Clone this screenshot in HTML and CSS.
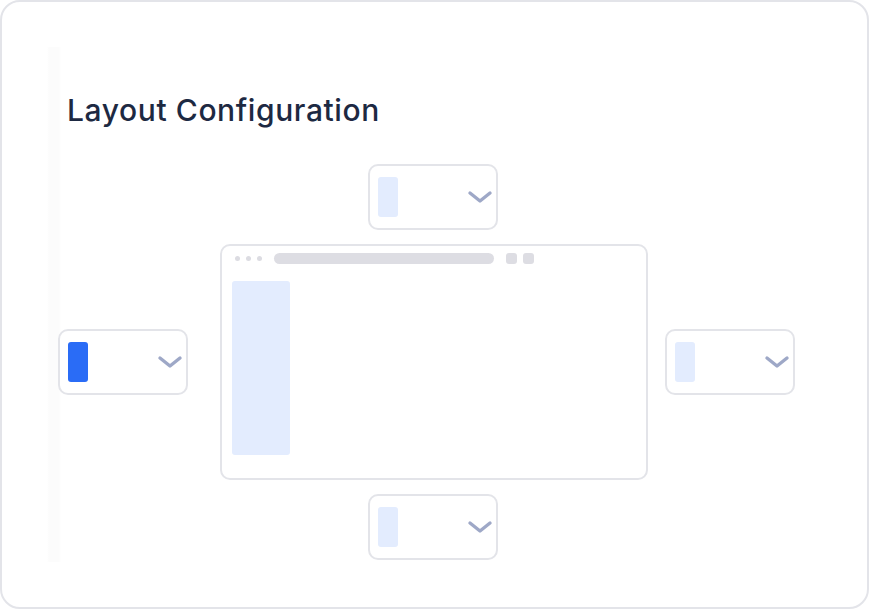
FILE: index.html
```html
<!DOCTYPE html>
<html lang="en">
<head>
<meta charset="utf-8">
<title>Layout Configuration</title>
<link rel="stylesheet" href="styles.css">
</head>
<body>
<div class="card">
  <div class="panel">
    <h1 class="title">Layout Configuration</h1>
    <div class="diagram">
      <div class="select pos-top">
        <span class="swatch"></span>
        <svg class="chev" viewBox="0 0 26 14" width="26" height="14"><path d="M3 3 L13 11 L23 3" fill="none" stroke="currentColor" stroke-width="3.4" stroke-linecap="round" stroke-linejoin="round"/></svg>
      </div>
      <div class="select pos-left">
        <span class="swatch active"></span>
        <svg class="chev" viewBox="0 0 26 14" width="26" height="14"><path d="M3 3 L13 11 L23 3" fill="none" stroke="currentColor" stroke-width="3.4" stroke-linecap="round" stroke-linejoin="round"/></svg>
      </div>
      <div class="browser pos-center">
        <div class="browser-bar">
          <span class="dots"><i></i><i></i><i></i></span>
          <span class="address"></span>
          <span class="sq"></span>
          <span class="sq"></span>
        </div>
        <div class="browser-body">
          <div class="sidebar"></div>
        </div>
      </div>
      <div class="select pos-right">
        <span class="swatch"></span>
        <svg class="chev" viewBox="0 0 26 14" width="26" height="14"><path d="M3 3 L13 11 L23 3" fill="none" stroke="currentColor" stroke-width="3.4" stroke-linecap="round" stroke-linejoin="round"/></svg>
      </div>
      <div class="select pos-bottom">
        <span class="swatch"></span>
        <svg class="chev" viewBox="0 0 26 14" width="26" height="14"><path d="M3 3 L13 11 L23 3" fill="none" stroke="currentColor" stroke-width="3.4" stroke-linecap="round" stroke-linejoin="round"/></svg>
      </div>
    </div>
  </div>
</div>
</body>
</html>
```

FILE: styles.css
```css
* { box-sizing: border-box; }

html, body {
  margin: 0;
  padding: 0;
  background: #ffffff;
}

body {
  font-family: Inter, "Noto Sans", "Liberation Sans", sans-serif;
  width: 869px;
  height: 609px;
}

.card {
  width: 869px;
  height: 609px;
  border: 2px solid #e3e4e9;
  border-radius: 20px;
  background: #ffffff;
  padding: 45px 0 0 45px;
}

.panel {
  width: 760px;
  height: 515px;
  background: linear-gradient(to right, #ffffff 0, #fcfcfc 2px, #fcfcfc 12px, #ffffff 14px);
  padding: 0 0 0 11px;
  display: flex;
  flex-direction: column;
}

.title {
  margin: 45px 0 0 9px;
  font-size: 30px;
  line-height: 36px;
  font-weight: 500;
  color: #1d2942;
  letter-spacing: 0.6px;
}

.diagram {
  margin-top: 36px;
  display: grid;
  grid-template-columns: 130px 32px 428px 17px 130px;
  grid-template-rows: 66px 236px 66px;
  row-gap: 14px;
}

.select {
  border: 2px solid #e3e4e9;
  border-radius: 10px;
  background: #ffffff;
  display: flex;
  align-items: center;
  justify-content: space-between;
  padding: 0 3px 0 8px;
  width: 130px;
  height: 66px;
}

.pos-top { grid-column: 3; grid-row: 1; justify-self: center; margin-right: 2px; }
.pos-left { grid-column: 1; grid-row: 2; align-self: center; }
.pos-center { grid-column: 3; grid-row: 2; }
.pos-right { grid-column: 5; grid-row: 2; align-self: center; }
.pos-bottom { grid-column: 3; grid-row: 3; justify-self: center; margin-right: 2px; }

.swatch {
  width: 20px;
  height: 40px;
  border-radius: 3px;
  background: #e3ecfe;
}

.swatch.active {
  background: #2a6cf6;
}

.chev {
  color: #9ea8c7;
  display: block;
}

.browser {
  border: 2px solid #e3e4e9;
  border-radius: 10px;
  background: #ffffff;
  display: flex;
  flex-direction: column;
}

.browser-bar {
  display: flex;
  align-items: center;
  height: 26px;
  padding: 0 0 2px 13px;
}

.dots {
  display: flex;
  gap: 6px;
}

.dots i {
  width: 5px;
  height: 5px;
  border-radius: 50%;
  background: #dcdce2;
}

.address {
  margin-left: 12px;
  width: 220px;
  height: 11px;
  border-radius: 6px;
  background: #dddde3;
}

.sq {
  margin-left: 12px;
  width: 11px;
  height: 11px;
  border-radius: 3px;
  background: #dddde3;
}

.sq + .sq { margin-left: 6px; }

.browser-body {
  flex: 1;
  padding: 9px 10px 23px;
}

.sidebar {
  width: 58px;
  height: 100%;
  border-radius: 3px;
  background: #e3ecfe;
}
```
